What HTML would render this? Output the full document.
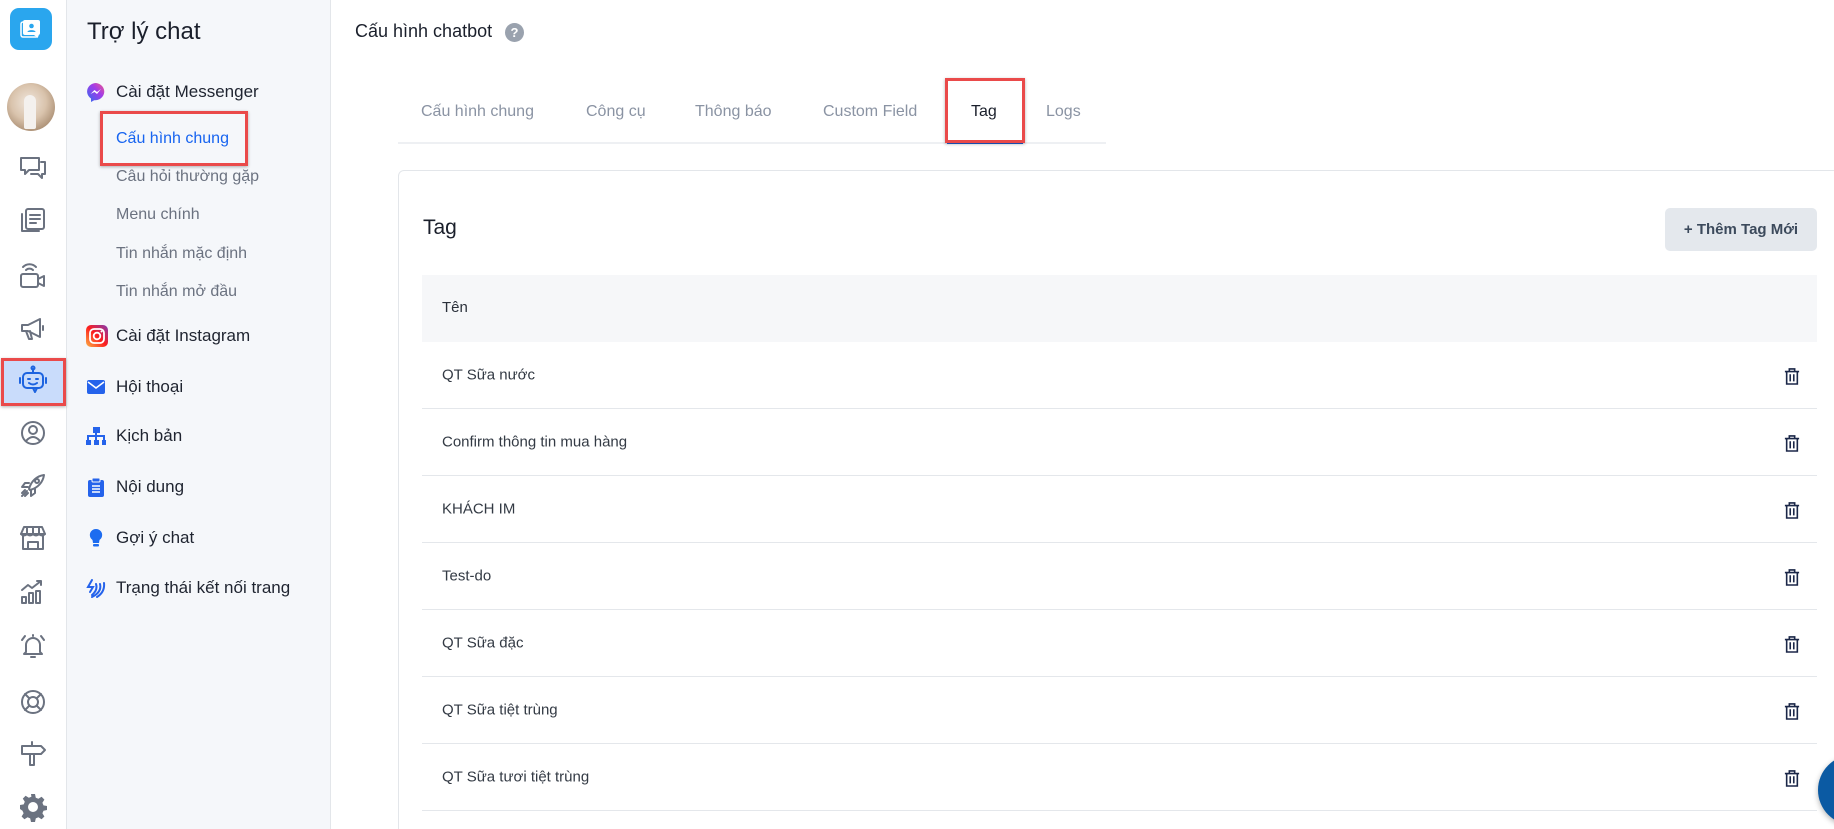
<!DOCTYPE html>
<html><head><meta charset="utf-8"><style>
*{box-sizing:border-box;margin:0;padding:0}
html,body{width:1834px;height:829px;overflow:hidden}
body{background:#fff;font-family:"Liberation Sans",Arial,sans-serif;position:relative;color:#1f2430}
.abs{position:absolute}
#rail{left:0;top:0;width:67px;height:829px;background:#fff;border-right:1px solid #e3e6ea}
#side{left:67px;top:0;width:264px;height:829px;background:#f5f7fa;border-right:1px solid #e3e6ea}
.ic{position:absolute;left:17px;width:32px;height:32px}
.ic svg{width:32px;height:32px;fill:none;stroke:#6b7280;stroke-width:2;stroke-linecap:round;stroke-linejoin:round}
.m1{position:absolute;left:116px;font-size:17px;color:#1f2430;transform:translateY(-50%)}
.m2{position:absolute;left:116px;font-size:16px;color:#6b7280;transform:translateY(-50%)}
.mi{position:absolute;left:86px;width:20px;height:20px;transform:translateY(-50%)}
.tab{position:absolute;top:112px;font-size:16px;color:#8a93a3;transform:translateY(-50%)}
.row{position:absolute;left:422px;width:1395px;height:67px;border-bottom:1.5px solid #e4e7eb}
.row span{position:absolute;left:20px;top:50%;transform:translateY(-50%);font-size:15px;color:#333a44}
.row svg{position:absolute;left:1362px;top:25px;width:16px;height:18px}
</style></head><body>
<div id="rail" class="abs"></div>
<div id="side" class="abs"></div>

<div class="abs" style="left:10px;top:8px;width:42px;height:42px;border-radius:9px;background:#2aa6ee"></div>
<svg class="abs" style="left:19px;top:17px" width="24" height="24" viewBox="0 0 24 24"><rect x="4" y="3" width="17" height="15" rx="2" fill="#fff"/><rect x="2" y="5" width="17" height="15" rx="2" fill="none" stroke="#fff" stroke-width="1.5"/><circle cx="12.5" cy="9" r="2.3" fill="#2aa6ee"/><path d="M8.5 15c0-2.5 8-2.5 8 0z" fill="#2aa6ee"/><path d="M15 18l4 3v-3z" fill="#fff"/></svg>
<div class="abs" style="left:7px;top:83px;width:48px;height:48px;border-radius:50%;background:radial-gradient(circle at 45% 40%,#f0e6dc 0,#d9c3ac 45%,#8a6a4c 100%)"></div>
<div class="abs" style="left:24px;top:95px;width:12px;height:34px;border-radius:6px 6px 2px 2px;background:#f4f1ee"></div>

<div class="ic" style="top:152px"><svg viewBox="0 0 32 32"><path d="M4 6h18v12H12l-4 4v-4H4z"/><path d="M24 10h4v12h-3v4l-4-4h-7"/></svg></div>
<div class="ic" style="top:204px"><svg viewBox="0 0 32 32"><rect x="9" y="5" width="18" height="20" rx="2"/><path d="M5 10v17h17"/><path d="M13 11h10M13 15h10M13 19h6"/></svg></div>
<div class="ic" style="top:260px"><svg viewBox="0 0 32 32"><rect x="4" y="14" width="17" height="13" rx="2"/><path d="M21 19l6-3v10l-6-3"/><path d="M9 10a5 5 0 0 1 7 0M6 7a9 9 0 0 1 13 0"/></svg></div>
<div class="ic" style="top:313px"><svg viewBox="0 0 32 32"><path d="M5 12h6l12-6v18l-12-6H5z"/><path d="M9 18l3 8h3l-2-8"/><path d="M26 13v4"/></svg></div>
<div class="abs" style="left:1px;top:358px;width:65px;height:48px;background:#c9dcfb;border:3px solid #ea4a4a;box-shadow:0 1px 3px rgba(0,0,0,.3)"></div>
<div class="ic" style="top:364px"><svg viewBox="0 0 32 32" style="stroke:#1d64e0"><rect x="6" y="9" width="20" height="15" rx="4"/><path d="M16 9V5"/><circle cx="16" cy="4" r="1.5"/><path d="M3 14v5M29 14v5"/><path d="M11 15h2M19 15h2M12 19q4 3 8 0"/><path d="M16 24l2 4 2-4"/></svg></div>
<div class="ic" style="top:417px"><svg viewBox="0 0 32 32"><circle cx="16" cy="16" r="11"/><circle cx="16" cy="13" r="4"/><path d="M9 24q7-8 14 0"/></svg></div>
<div class="ic" style="top:469px"><svg viewBox="0 0 32 32"><path d="M12 20c2-8 8-13 15-14-1 7-6 13-14 15z"/><circle cx="20" cy="12" r="2"/><path d="M12 14H8l-3 4h6M18 20v4l-4 3v-6M5 27l5-5M8 27l3-3M5 24l3-3"/></svg></div>
<div class="ic" style="top:522px"><svg viewBox="0 0 32 32"><path d="M4 12l3-7h18l3 7z"/><path d="M4 12q3 3 6 0 3 3 6 0 3 3 6 0 3 3 6 0"/><path d="M6 14v13h20V14M11 27v-7h10v7M10 5v7M16 5v7M22 5v7"/></svg></div>
<div class="ic" style="top:576px"><svg viewBox="0 0 32 32"><rect x="5" y="21" width="4" height="6"/><rect x="12" y="17" width="4" height="10"/><rect x="19" y="15" width="4" height="12"/><path d="M5 14l6-5 4 3 9-7M20 5h4v4"/></svg></div>
<div class="ic" style="top:630px"><svg viewBox="0 0 32 32"><path d="M9 22V15a7 7 0 0 1 14 0v7l2 2H7z"/><path d="M14 27h4M5 10l3-4M27 10l-3-4M16 6V5"/></svg></div>
<div class="ic" style="top:686px"><svg viewBox="0 0 32 32"><circle cx="16" cy="16" r="11"/><circle cx="16" cy="16" r="5"/><path d="M8 8l4 4M24 8l-4 4M8 24l4-4M24 24l-4-4"/></svg></div>
<div class="ic" style="top:738px"><svg viewBox="0 0 32 32"><path d="M5 8h19l4 4-4 4H5z"/><path d="M13 16v11h4V16M15 4v4"/></svg></div>
<div class="ic" style="top:791px"><svg viewBox="0 0 32 32" style="fill:#6b7280;stroke:none"><path d="M14 3h4l.8 3.7 2.6 1.1 3.2-2 2.8 2.8-2 3.2 1.1 2.6 3.5.6v4l-3.5.7-1.1 2.6 2 3.2-2.8 2.8-3.2-2-2.6 1.1-.8 3.6h-4l-.8-3.6-2.6-1.1-3.2 2-2.8-2.8 2-3.2-1.1-2.6L3 18v-4l3.7-.6 1.1-2.6-2-3.2 2.8-2.8 3.2 2 2.6-1.1zM16 11a5 5 0 1 0 0 10 5 5 0 0 0 0-10z"/></svg></div>

<div class="abs" style="left:87px;top:18px;font-size:24px;color:#1a1f2b">Trợ lý chat</div>
<svg class="mi" style="top:92px" viewBox="0 0 20 20"><defs><linearGradient id="g1" x1="0" y1="1" x2="1" y2="0"><stop offset="0" stop-color="#2f6cf0"/><stop offset=".6" stop-color="#a23ce8"/><stop offset="1" stop-color="#f05a8a"/></linearGradient></defs><path d="M10 1a9 8.5 0 0 0-5 15.5V20l3.2-1.8A9 8.5 0 1 0 10 1z" fill="url(#g1)"/><path d="M4.5 12l4-4 2.5 2 4-3-4 5-2.5-2z" fill="#fff"/></svg>
<div class="m1" style="top:92px">Cài đặt Messenger</div>
<div class="abs" style="left:100px;top:111px;width:148px;height:55px;border:3px solid #ea4a4a;box-shadow:0 1px 3px rgba(0,0,0,.3)"></div>
<div class="m2" style="top:139px;color:#1764f0">Cấu hình chung</div>
<div class="m2" style="top:177px">Câu hỏi thường gặp</div>
<div class="m2" style="top:215px">Menu chính</div>
<div class="m2" style="top:254px">Tin nhắn mặc định</div>
<div class="m2" style="top:292px">Tin nhắn mở đầu</div>
<svg class="mi" style="top:336px;width:22px;height:22px" viewBox="0 0 22 22"><defs><linearGradient id="g2" x1="0" y1="1" x2="1" y2="0"><stop offset="0" stop-color="#fcb045"/><stop offset=".5" stop-color="#fd1d1d"/><stop offset="1" stop-color="#833ab4"/></linearGradient></defs><rect x="0" y="0" width="22" height="22" rx="5" fill="url(#g2)"/><rect x="4" y="4" width="14" height="14" rx="4" fill="none" stroke="#fff" stroke-width="1.8"/><circle cx="11" cy="11" r="3.3" fill="none" stroke="#fff" stroke-width="1.8"/><circle cx="15.5" cy="6.5" r="1" fill="#fff"/></svg>
<div class="m1" style="top:336px">Cài đặt Instagram</div>
<svg class="mi" style="top:387px" viewBox="0 0 20 20"><rect x="1" y="3" width="18" height="14" rx="2" fill="#2563eb"/><path d="M2 5l8 6 8-6" fill="none" stroke="#fff" stroke-width="1.6"/></svg>
<div class="m1" style="top:387px">Hội thoại</div>
<svg class="mi" style="top:436px" viewBox="0 0 20 20" fill="#2563eb"><rect x="7" y="1" width="7" height="6"/><rect x="0" y="14" width="5" height="5"/><rect x="8" y="14" width="5" height="5"/><rect x="16" y="14" width="4" height="5"/><path d="M10 7v7M2 14v-4h16v4" stroke="#2563eb" stroke-width="2" fill="none"/></svg>
<div class="m1" style="top:436px">Kịch bản</div>
<svg class="mi" style="top:487px" viewBox="0 0 20 20"><rect x="2" y="3" width="16" height="17" rx="2" fill="#2563eb"/><rect x="6" y="1" width="8" height="4" rx="1" fill="#2563eb" stroke="#f5f7fa" stroke-width="1"/><path d="M6 9h8M6 12h8M6 15h8" stroke="#fff" stroke-width="1.5"/></svg>
<div class="m1" style="top:487px">Nội dung</div>
<svg class="mi" style="top:538px" viewBox="0 0 20 20"><path d="M10 1a6 6 0 0 0-3.5 11l.5 3h6l.5-3A6 6 0 0 0 10 1z" fill="#1d6cf0"/><rect x="7" y="16" width="6" height="2.5" rx="1" fill="#1d6cf0"/></svg>
<div class="m1" style="top:538px">Gợi ý chat</div>
<svg class="mi" style="top:588px" viewBox="0 0 20 20" fill="none" stroke="#2563eb" stroke-width="2" stroke-linecap="round"><path d="M6 2L2 9h5l-3 5"/><path d="M10 6q2 6-4 11M14 6q2 8-8 13M18 5q1 9-7 14"/></svg>
<div class="m1" style="top:588px">Trạng thái kết nối trang</div>

<div class="abs" style="left:355px;top:21px;font-size:18px;color:#1a1f2b">Cấu hình chatbot</div>
<div class="abs" style="left:505px;top:23px;width:19px;height:19px;border-radius:50%;background:#9aa2ae;color:#fff;font-size:13px;font-weight:bold;text-align:center;line-height:19px">?</div>

<div class="abs" style="left:398px;top:142px;width:708px;height:2px;background:#eef0f3"></div>
<div class="tab" style="left:421px">Cấu hình chung</div>
<div class="tab" style="left:586px">Công cụ</div>
<div class="tab" style="left:695px">Thông báo</div>
<div class="tab" style="left:823px">Custom Field</div>
<div class="tab" style="left:971px;color:#1a1f2b">Tag</div>
<div class="tab" style="left:1046px">Logs</div>
<div class="abs" style="left:947px;top:140px;width:76px;height:4px;background:#1d5fd6"></div>
<div class="abs" style="left:945px;top:78px;width:80px;height:65px;border:3px solid #ea4a4a;box-shadow:0 1px 3px rgba(0,0,0,.3)"></div>

<div class="abs" style="left:398px;top:170px;width:1450px;height:680px;border:1.5px solid #e3e6ea;border-radius:6px;background:#fff"></div>
<div class="abs" style="left:423px;top:216px;font-size:21px;color:#1a1f2b">Tag</div>
<div class="abs" style="left:1665px;top:208px;width:152px;height:43px;border-radius:5px;background:#e4e8ed;color:#3c4a5c;font-size:15px;font-weight:bold;text-align:center;line-height:43px">+ Thêm Tag Mới</div>
<div class="abs" style="left:422px;top:275px;width:1395px;height:67px;background:#f6f7f9"><span style="position:absolute;left:20px;top:24px;font-size:15px;color:#2b313b">Tên</span></div>

<div class="row" style="top:342px"><span>QT Sữa nước</span><svg viewBox="0 0 18 20" fill="none" stroke="#1b2748" stroke-width="1.8"><path d="M1 5h16M6 5V2h6v3M3 5v14h12V5M7 8v8M11 8v8"/></svg></div>
<div class="row" style="top:409px"><span>Confirm thông tin mua hàng</span><svg viewBox="0 0 18 20" fill="none" stroke="#1b2748" stroke-width="1.8"><path d="M1 5h16M6 5V2h6v3M3 5v14h12V5M7 8v8M11 8v8"/></svg></div>
<div class="row" style="top:476px"><span>KHÁCH IM</span><svg viewBox="0 0 18 20" fill="none" stroke="#1b2748" stroke-width="1.8"><path d="M1 5h16M6 5V2h6v3M3 5v14h12V5M7 8v8M11 8v8"/></svg></div>
<div class="row" style="top:543px"><span>Test-do</span><svg viewBox="0 0 18 20" fill="none" stroke="#1b2748" stroke-width="1.8"><path d="M1 5h16M6 5V2h6v3M3 5v14h12V5M7 8v8M11 8v8"/></svg></div>
<div class="row" style="top:610px"><span>QT Sữa đặc</span><svg viewBox="0 0 18 20" fill="none" stroke="#1b2748" stroke-width="1.8"><path d="M1 5h16M6 5V2h6v3M3 5v14h12V5M7 8v8M11 8v8"/></svg></div>
<div class="row" style="top:677px"><span>QT Sữa tiệt trùng</span><svg viewBox="0 0 18 20" fill="none" stroke="#1b2748" stroke-width="1.8"><path d="M1 5h16M6 5V2h6v3M3 5v14h12V5M7 8v8M11 8v8"/></svg></div>
<div class="row" style="top:744px"><span>QT Sữa tươi tiệt trùng</span><svg viewBox="0 0 18 20" fill="none" stroke="#1b2748" stroke-width="1.8"><path d="M1 5h16M6 5V2h6v3M3 5v14h12V5M7 8v8M11 8v8"/></svg></div>

<div class="abs" style="left:1818px;top:755px;width:70px;height:70px;border-radius:50%;background:#0b5aa3;box-shadow:0 2px 6px rgba(0,0,0,.3)"></div>
</body></html>
